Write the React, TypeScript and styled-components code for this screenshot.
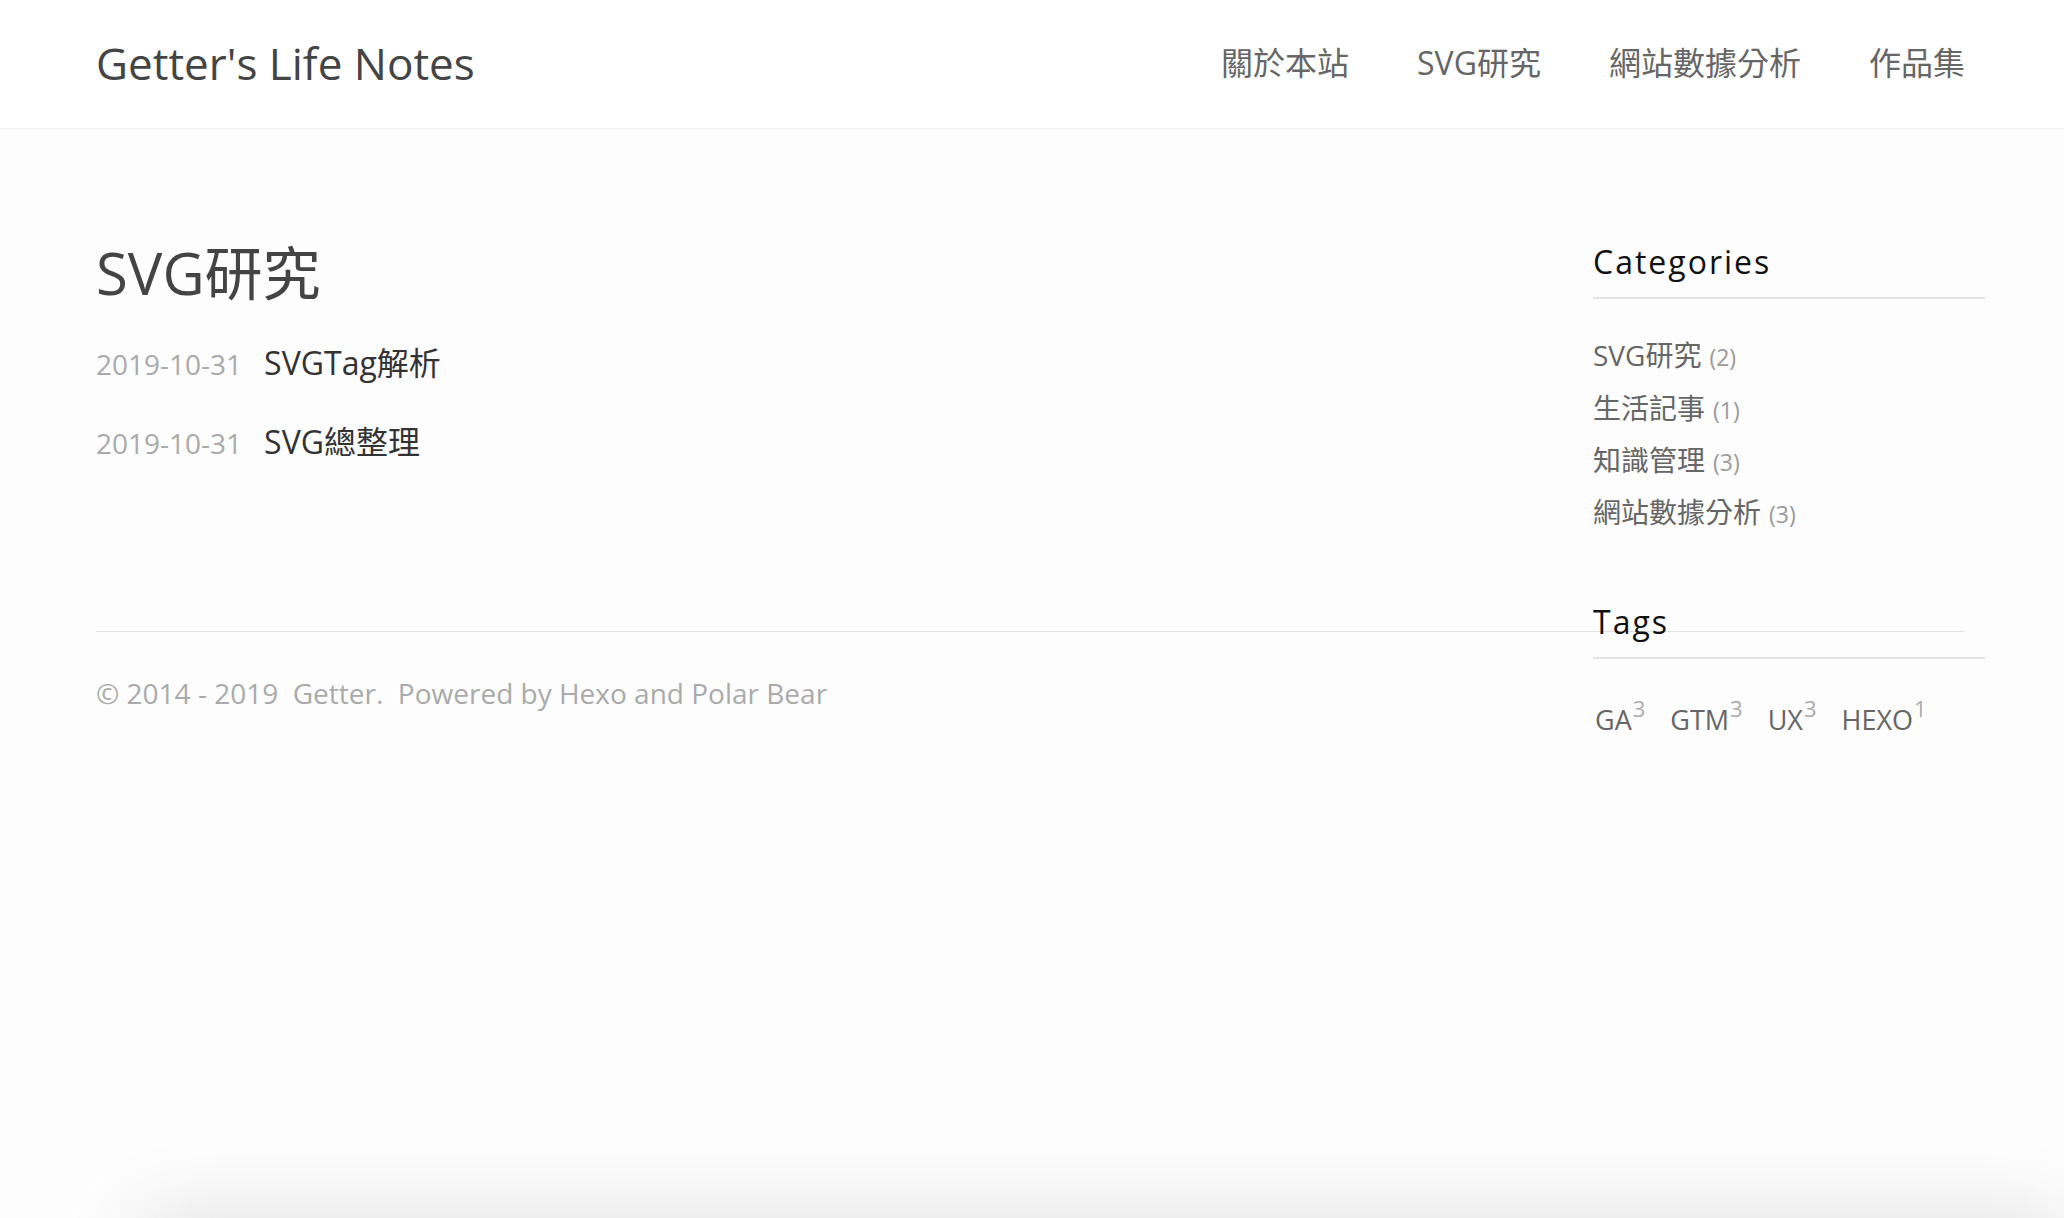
import React from "react";
import styled, { createGlobalStyle } from "styled-components";

const Global = createGlobalStyle`
  html, body {
    margin: 0;
    padding: 0;
    background: #fdfdfd;
  }
  body {
    font-family: "Open Sans", "Noto Sans CJK TC", sans-serif;
    -webkit-font-smoothing: antialiased;
  }
  a { text-decoration: none; color: inherit; }
`;

const Screen = styled.div`
  height: 100vh;
  display: flex;
  flex-direction: column;
  overflow: hidden;
  background: #fdfdfd;
`;

const Header = styled.header`
  flex: none;
  height: 128px;
  border-bottom: 1px solid #efefef;
  background: #ffffff;
  display: flex;
  align-items: center;
  justify-content: space-between;
  padding: 0 99px 0 96px;
`;

const Logo = styled.a`
  font-size: 44px;
  line-height: 1.362;
  color: #444444;
`;

const Nav = styled.nav`
  display: flex;
  gap: 68px;
  font-size: 32px;
  line-height: 1.2;
  color: #666666;
  margin-top: -2px;
`;

const Main = styled.main`
  flex: none;
  padding: 109px 99px 0 96px;
`;

const Sidebar = styled.aside`
  float: right;
  width: 392px;
  margin-top: 5px;
  margin-right: -20px;
`;

const WidgetTitle = styled.h3`
  margin: 0;
  font-size: 32px;
  font-weight: 400;
  line-height: 1.2;
  letter-spacing: 2px;
  color: #111111;
  padding-bottom: 16px;
  border-bottom: 2px solid #e3e3e3;
`;

const Widget = styled.section<{ $gap?: number }>`
  margin-top: ${(p) => p.$gap ?? 0}px;
`;

const CategoryList = styled.ul`
  list-style: none;
  margin: 30px 0 0;
  padding: 0;
`;

const CategoryItem = styled.li`
  font-size: 28px;
  line-height: 52.3px;
  color: #666666;
`;

const Count = styled.span`
  font-size: 23px;
  line-height: 1;
  color: #9a9a9a;
  margin-left: 8px;
`;

const TagCloud = styled.div`
  margin-top: 41px;
  display: flex;
  gap: 25px;
  padding-left: 2px;
  font-size: 27px;
  line-height: 1.5;
`;

const Tag = styled.a`
  color: #666666;
`;

const TagCount = styled.sup`
  font-size: 22px;
  vertical-align: 13px;
  line-height: 0;
  color: #aaaaaa;
  margin-left: 1px;
`;

const PageTitle = styled.h1`
  margin: 0;
  font-size: 58px;
  font-weight: 400;
  line-height: 1.2;
  color: #444444;
`;

const PostList = styled.div`
  margin-top: 32px;
  display: flex;
  flex-direction: column;
  gap: 32px;
`;

const PostRow = styled.div`
  display: flex;
  align-items: baseline;
  line-height: 46px;
`;

const PostDate = styled.span`
  font-size: 28px;
  color: #aaaaaa;
  margin-right: 22px;
`;

const PostLink = styled.a`
  font-size: 32px;
  color: #333333;
`;

const Footer = styled.footer`
  margin-top: 165px;
  border-top: 1px solid #e2e2e2;
  padding-top: 41px;
  font-size: 28px;
  line-height: 40px;
  color: #aaaaaa;
`;

const Shelf = styled.div`
  flex: none;
  margin-top: auto;
  margin-left: 140px;
  margin-bottom: -300px;
  height: 300px;
  background: #fdfdfd;
  box-shadow: 0 0 80px rgba(0, 0, 0, 0.12);
`;

const categories = [
  { name: "SVG研究", count: 2 },
  { name: "生活記事", count: 1 },
  { name: "知識管理", count: 3 },
  { name: "網站數據分析", count: 3 },
];

const tags = [
  { name: "GA", count: 3 },
  { name: "GTM", count: 3 },
  { name: "UX", count: 3 },
  { name: "HEXO", count: 1 },
];

const posts = [
  { date: "2019-10-31", title: "SVGTag解析" },
  { date: "2019-10-31", title: "SVG總整理" },
];

const navItems = ["關於本站", "SVG研究", "網站數據分析", "作品集"];

export default function App() {
  return (
    <>
      <Global />
      <Screen>
        <Header>
          <Logo href="#">Getter's Life Notes</Logo>
          <Nav>
            {navItems.map((n) => (
              <a key={n} href="#">
                {n}
              </a>
            ))}
          </Nav>
        </Header>
        <Main>
          <Sidebar>
            <Widget>
              <WidgetTitle>Categories</WidgetTitle>
              <CategoryList>
                {categories.map((c) => (
                  <CategoryItem key={c.name}>
                    {c.name}
                    <Count>({c.count})</Count>
                  </CategoryItem>
                ))}
              </CategoryList>
            </Widget>
            <Widget $gap={64}>
              <WidgetTitle>Tags</WidgetTitle>
              <TagCloud>
                {tags.map((t) => (
                  <Tag key={t.name} href="#">
                    {t.name}
                    <TagCount>{t.count}</TagCount>
                  </Tag>
                ))}
              </TagCloud>
            </Widget>
          </Sidebar>
          <PageTitle>SVG研究</PageTitle>
          <PostList>
            {posts.map((p) => (
              <PostRow key={p.title}>
                <PostDate>{p.date}</PostDate>
                <PostLink href="#">{p.title}</PostLink>
              </PostRow>
            ))}
          </PostList>
          <Footer>
            © 2014 - 2019&nbsp; Getter.&nbsp; Powered by Hexo and Polar Bear
          </Footer>
        </Main>
        <Shelf />
      </Screen>
    </>
  );
}
